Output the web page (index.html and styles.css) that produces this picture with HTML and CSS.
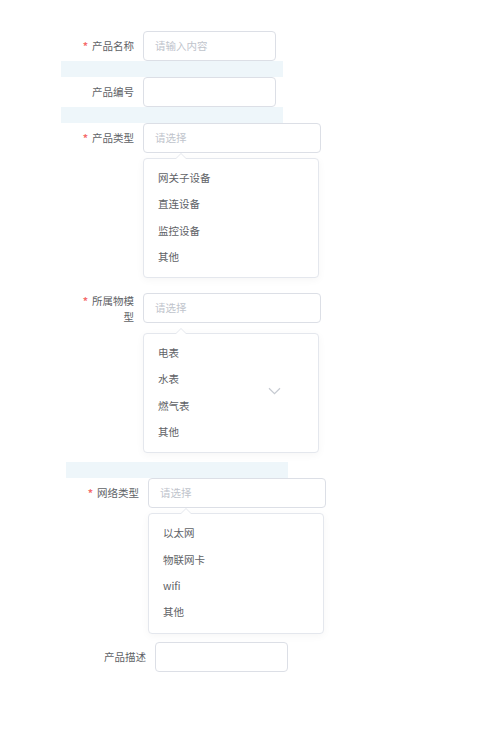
FILE: index.html
```
<!DOCTYPE html>
<html lang="zh-CN">
<head>
  <meta charset="UTF-8" />
  <meta name="viewport" content="width=device-width, initial-scale=1.0"/>
  <title>产品表单</title>
  <link rel="stylesheet" href="styles.css">
</head>
<body>

  <form class="form">

    <!-- 产品名称 -->
    <div class="form-item">
      <label class="item-label"><span class="req">*</span>产品名称</label>
      <div class="item-control">
        <div class="input input-sm"><span class="placeholder">请输入内容</span></div>
      </div>
    </div>
    <div class="band"></div>

    <!-- 产品编号 -->
    <div class="form-item">
      <label class="item-label">产品编号</label>
      <div class="item-control">
        <div class="input input-sm"></div>
      </div>
    </div>
    <div class="band"></div>

    <!-- 产品类型 -->
    <div class="form-item">
      <label class="item-label"><span class="req">*</span>产品类型</label>
      <div class="item-control">
        <div class="input"><span class="placeholder">请选择</span></div>
        <div class="dropdown">
          <span class="arrow"></span>
          <ul class="options">
            <li>网关子设备</li>
            <li>直连设备</li>
            <li>监控设备</li>
            <li>其他</li>
          </ul>
        </div>
      </div>
    </div>

    <!-- 所属物模型 -->
    <div class="form-item item-model">
      <label class="item-label label-wrap"><span class="req">*</span>所属物模型</label>
      <div class="item-control">
        <div class="input"><span class="placeholder">请选择</span></div>
        <div class="dropdown dropdown-far">
          <span class="arrow"></span>
          <ul class="options">
            <li>电表</li>
            <li>水表</li>
            <li>燃气表</li>
            <li>其他</li>
          </ul>
          <svg class="chevron" width="13" height="8" viewBox="0 0 13 8">
            <path d="M1 1.2 L6.5 6.6 L12 1.2" fill="none" stroke="#c6cad1" stroke-width="1.2"/>
          </svg>
        </div>
      </div>
    </div>

    <!-- 网络类型 -->
    <div class="shift-5">
      <div class="band"></div>
      <div class="form-item">
        <label class="item-label"><span class="req">*</span>网络类型</label>
        <div class="item-control">
          <div class="input"><span class="placeholder">请选择</span></div>
          <div class="dropdown">
            <span class="arrow"></span>
            <ul class="options">
              <li>以太网</li>
              <li>物联网卡</li>
              <li>wifi</li>
              <li>其他</li>
            </ul>
          </div>
        </div>
      </div>
    </div>

    <!-- 产品描述 -->
    <div class="form-item shift-12">
      <label class="item-label">产品描述</label>
      <div class="item-control">
        <div class="input input-sm"></div>
      </div>
    </div>

  </form>

</body>
</html>
```

FILE: styles.css
```
* {
  margin: 0; padding: 0;
  box-sizing: border-box;
}

body {
  background: #fff;
  font-family: "Noto Sans CJK SC", "Noto Sans", sans-serif;
  font-size: 10.5px;
  color: #606266;
}

.form {
  width: 222px;
  margin-left: 61px;
  padding-top: 31px;
}

.form-item {
  display: flex;
  align-items: flex-start;
}

.item-label {
  width: 82px;
  flex-shrink: 0;
  padding-right: 9px;
  text-align: right;
  line-height: 30px;
  color: #606266;
}

.label-wrap {
  line-height: 16px;
  padding-left: 20px;
}

.req {
  color: #f56c6c;
  font-weight: bold;
  margin-right: 4px;
}

.item-control {
  position: relative;
}

.input {
  width: 178px;
  height: 30px;
  border: 1px solid #dcdfe6;
  border-radius: 4px;
  padding: 0 11px;
  line-height: 28px;
  background: #fff;
}

.input-sm {
  width: 133px;
}

.placeholder {
  color: #c0c4cc;
}

.band {
  width: 222px;
  height: 16px;
  background: #eef6fa;
}

.dropdown {
  position: relative;
  width: 176px;
  margin-top: 5px;
  border: 1px solid #e4e7ed;
  border-radius: 4px;
  background: #fff;
  box-shadow: 0 2px 8px rgba(0, 0, 0, 0.04);
}

.dropdown-far {
  margin-top: 10px;
}

.arrow {
  position: absolute;
  top: -6px;
  left: 31px;
  width: 0;
  height: 0;
  border-left: 6px solid transparent;
  border-right: 6px solid transparent;
  border-bottom: 6px solid #e4e7ed;
}

.arrow::after {
  content: "";
  position: absolute;
  top: 1px;
  left: -5px;
  border-left: 5px solid transparent;
  border-right: 5px solid transparent;
  border-bottom: 5px solid #fff;
}

.options {
  list-style: none;
  padding: 6px 0 7px;
}

.options li {
  height: 26.3px;
  line-height: 26.3px;
  padding-left: 14px;
  color: #606266;
}

.chevron {
  position: absolute;
  left: 124px;
  top: 53px;
}

.item-model {
  margin-top: 15px;
}

.shift-5 {
  margin-left: 5px;
  margin-top: 9px;
}

.shift-12 {
  margin-left: 12px;
  margin-top: 8px;
}
```
